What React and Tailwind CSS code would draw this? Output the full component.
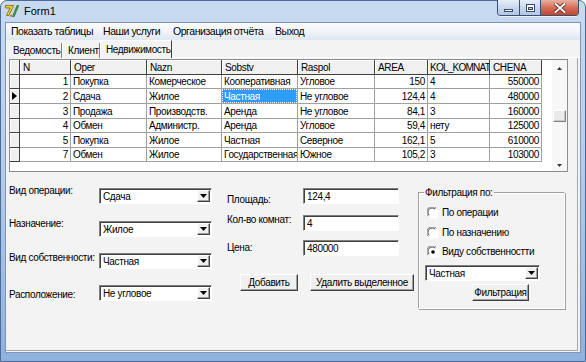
import React from "react";

const ui = "font-['Liberation_Sans',Arial,sans-serif] text-[10px] leading-[13px] tracking-[-0.35px] text-black";

const cols = [
  { t: "N", w: "w-[51px]", r: true, hc: "pl-[3px]" },
  { t: "Oper", w: "w-[76px]", hc: "pl-[3px]" },
  { t: "Nazn", w: "w-[75px]", hc: "pl-[3px]" },
  { t: "Sobstv", w: "w-[76px]", hc: "pl-[3px]" },
  { t: "Raspol", w: "w-[77px]", hc: "pl-[3px]" },
  { t: "AREA", w: "w-[53px]", r: true, hc: "pl-[3px]" },
  { t: "KOL_KOMNAT", w: "w-[62px]", hc: "pl-[2px] tracking-[-0.75px]" },
  { t: "CHENA", w: "w-[52px]", r: true, hc: "pl-[3px]" },
];

const rows = [
  { h: "h-[14px]", d: ["1", "Покупка", "Комерческое", "Кооперативная", "Угловое", "150", "4", "550000"] },
  { h: "h-[15px]", d: ["2", "Сдача", "Жилое", "Частная", "Не угловое", "124,4", "4", "480000"], cur: true },
  { h: "h-[15px]", d: ["3", "Продажа", "Производств.", "Аренда", "Не угловое", "84,1", "3", "160000"] },
  { h: "h-[14px]", d: ["4", "Обмен", "Администр.", "Аренда", "Угловое", "59,4", "нету", "125000"] },
  { h: "h-[15px]", d: ["5", "Покупка", "Жилое", "Частная", "Северное", "162,1", "5", "610000"] },
  { h: "h-[14px]", d: ["7", "Обмен", "Жилое", "Государственная", "Южное", "105,2", "3", "103000"] },
];

function Arrow() {
  return (
    <svg width="7" height="4" viewBox="0 0 7 4">
      <path d="M0 0h7L3.5 4z" fill="#000" />
    </svg>
  );
}

function Combo({ value, w = "w-[113px]" }) {
  return (
    <div className={`${w} h-[16px] flex items-stretch bg-white border border-t-[#808080] border-l-[#808080] border-r-white border-b-white shadow-[inset_1px_1px_0_#404040]`}>
      <div className="flex-1 pl-[3px] pt-px whitespace-nowrap overflow-hidden">{value}</div>
      <div className="w-[13px] my-px mr-px flex items-center justify-center bg-[#f0f0f0] border border-t-white border-l-white border-r-[#404040] border-b-[#404040] shadow-[inset_-1px_-1px_0_#a0a0a0]">
        <Arrow />
      </div>
    </div>
  );
}

function Edit({ value }) {
  return (
    <div className="w-[96px] h-[16px] bg-white pl-[3px] pt-px border border-t-[#808080] border-l-[#808080] border-r-white border-b-white shadow-[inset_1px_1px_0_#404040] whitespace-nowrap">
      {value}
    </div>
  );
}

function Button({ children, w }) {
  return (
    <div className={`${w} h-[17px] flex items-center justify-center bg-[#f0f0f0] border border-t-white border-l-white border-r-[#404040] border-b-[#404040] shadow-[inset_-1px_-1px_0_#a0a0a0] whitespace-nowrap`}>
      {children}
    </div>
  );
}

function Radio({ checked, label }) {
  return (
    <div className="flex items-center h-[13px]">
      <svg width="12" height="12" viewBox="0 0 12 12" className="shrink-0">
        <circle cx="6" cy="6" r="5.5" fill="#fff" />
        <path d="M1.2 9.2A5.3 5.3 0 0 1 9.2 1.2" stroke="#808080" strokeWidth="1" fill="none" />
        <path d="M2.2 8.2A3.9 3.9 0 0 1 8.2 2.2" stroke="#404040" strokeWidth="1" fill="none" />
        <path d="M10.8 2.8A5.3 5.3 0 0 1 2.8 10.8" stroke="#ffffff" strokeWidth="1" fill="none" />
        {checked && <circle cx="6" cy="6" r="1.8" fill="#000" />}
      </svg>
      <span className="ml-[3px] whitespace-nowrap">{label}</span>
    </div>
  );
}

function Grid() {
  return (
    <div className="w-[559px] h-[113px] flex border border-[#8c8c8c] bg-white">
      <div className="w-[542px] flex flex-col">
        <div className="flex h-[15px]">
          <div className="w-[10px] shrink-0 bg-[#f0f0f0] border-r border-b border-[#404040] shadow-[inset_1px_1px_0_#fff]" />
          {cols.map((c) => (
            <div key={c.t} className={`${c.w} ${c.hc} shrink-0 bg-[#f0f0f0] border-r border-b border-[#404040] shadow-[inset_1px_1px_0_#fff] flex items-center whitespace-nowrap overflow-hidden`}>
              {c.t}
            </div>
          ))}
          <div className="flex-1" />
        </div>
        {rows.map((row, ri) => (
          <div key={ri} className={`flex ${row.h}`}>
            <div className="w-[10px] shrink-0 bg-[#f0f0f0] border-r border-b border-[#404040] shadow-[inset_1px_1px_0_#fff] flex items-center justify-start">
              {row.cur && (
                <svg width="5" height="8" viewBox="0 0 5 8" className="ml-[2px]">
                  <path d="M0 0l5 4-5 4z" fill="#000" />
                </svg>
              )}
            </div>
            {row.d.map((v, ci) => {
              const c = cols[ci];
              const sel = row.cur && ci === 3;
              return (
                <div
                  key={ci}
                  className={`${c.w} shrink-0 border-r border-b border-[#a0a0a0] flex items-center whitespace-nowrap overflow-hidden ${sel ? "" : c.r ? "justify-end pr-[2px]" : "pl-[2px]"}`}
                >
                  {sel ? (
                    <div className="w-full h-full bg-[#3399ff] text-white flex items-center pl-[2px] outline-1 outline-dotted outline-[#ffffff] -outline-offset-1">{v}</div>
                  ) : (
                    v
                  )}
                </div>
              );
            })}
            <div className="flex-1" />
          </div>
        ))}
      </div>
      <div className="w-[15px] flex flex-col bg-[#f7f7f7]">
        <div className="h-[16px] flex items-center justify-center">
          <svg width="5" height="3" viewBox="0 0 5 3"><path d="M0 3h5L2.5 0z" fill="#333" /></svg>
        </div>
        <div className="h-[34px]" />
        <div className="h-[12px] mx-px bg-[#eaeaea] border border-t-white border-l-white border-r-[#808080] border-b-[#808080] shadow-[inset_-1px_-1px_0_#c8c8c8]" />
        <div className="flex-1" />
        <div className="h-[12px] flex items-center justify-center">
          <svg width="5" height="3" viewBox="0 0 5 3"><path d="M0 0h5L2.5 3z" fill="#333" /></svg>
        </div>
      </div>
    </div>
  );
}

export default function App() {
  return (
    <div className="w-[586px] h-[362px] overflow-hidden bg-white">
      <div className="w-[586px] h-[362px] flex flex-col rounded-t-[7px] border border-[#4d6b97] bg-gradient-to-b from-[#c8daf0] via-[#b3cbea] to-[#8fb1de]">
        {/* Title bar */}
        <div className="h-[21px] flex items-start">
          <svg width="14" height="14" viewBox="0 0 14 14" className="ml-[4px] mt-[3px]">
            <path d="M0.5 1.5h8l-4.5 10h-2.5l3.5-7.5H0.5z" fill="#f2cf2a" stroke="#7a6410" strokeWidth="0.8" />
            <path d="M7.5 12.5L12 1.5h1.8L9.2 12.5z" fill="#3fa535" stroke="#1f5c1a" strokeWidth="0.6" />
            <path d="M5 12.5l1-2 1.5 2z" fill="#d23a2a" />
          </svg>
          <div className="ml-[5px] mt-[3px] font-['Liberation_Sans',Arial,sans-serif] text-[11px] leading-[14px] text-black">Form1</div>
          <div className="ml-auto mr-[6px] -mt-px flex h-[16px] border border-t-0 border-[#3a4f70] rounded-b-[4px] overflow-hidden shadow-[0_1px_0_rgba(255,255,255,0.6)]">
            <div className="w-[22px] flex items-center justify-center bg-gradient-to-b from-[#e6eef9] via-[#c9d8ee] to-[#b1c7e6] border-r border-[#3a4f70]">
              <div className="w-[9px] h-[3px] mt-[5px] bg-white border border-[#3a4a66]" />
            </div>
            <div className="w-[21px] flex items-center justify-center bg-gradient-to-b from-[#e6eef9] via-[#c9d8ee] to-[#b1c7e6] border-r border-[#3a4f70]">
              <div className="w-[9px] h-[8px] border border-[#3a4a66] bg-white flex items-center justify-center">
                <div className="w-[5px] h-[3px] mt-[1px] bg-[#b9cbe5] border border-[#3a4a66]" />
              </div>
            </div>
            <div className="w-[37px] flex items-center justify-center bg-gradient-to-b from-[#eab0a4] via-[#d56e5a] to-[#c4442d]">
              <svg width="12" height="10" viewBox="0 0 12 10">
                <path d="M1.5 1l9 8M10.5 1l-9 8" stroke="#4a1a12" strokeWidth="3.4" strokeLinecap="square" />
                <path d="M1.5 1l9 8M10.5 1l-9 8" stroke="#ffffff" strokeWidth="2" strokeLinecap="square" />
              </svg>
            </div>
          </div>
        </div>

        {/* Client */}
        <div className={`flex-1 mx-[4px] mb-[8px] border border-[#7f95b5] bg-[#f3f3f3] flex flex-col ${ui}`}>
          {/* Menu */}
          <div className="h-[17px] flex items-center bg-gradient-to-b from-[#fbfcfe] via-[#f1f4f9] to-[#dfe7f3] text-[10.5px] tracking-[-0.45px] whitespace-nowrap">
            <div className="w-[92px] pl-[5px]">Показать таблицы</div>
            <div className="w-[70px] pl-[5px]">Наши услуги</div>
            <div className="w-[102px] pl-[5px]">Организация отчёта</div>
            <div className="pl-[5px]">Выход</div>
          </div>
          {/* Tabs */}
          <div className="h-[18px] flex items-end pl-[3px]">
            <div className="w-[53px] h-[15px] flex items-center pl-[4px] border-r border-[#808080] whitespace-nowrap">Ведомость</div>
            <div className="w-[38px] h-[15px] flex items-center pl-[5px] border-l border-white border-r border-r-[#808080] whitespace-nowrap">Клиент</div>
            <div className="w-[72px] h-[18px] flex items-center pl-[5px] bg-[#f3f3f3] border-l border-t border-white border-r border-r-[#404040] whitespace-nowrap">Недвижимость</div>
            <div className="flex-1 h-px bg-white" />
          </div>
          {/* Sheet */}
          <div className="flex-1 mr-[2px] mb-px pl-[3px] pt-px border-r border-b border-[#a8a8a8] flex flex-col">
            <Grid />
            <div className="flex items-start mt-[12px]">
              {/* Left */}
              <div className="flex flex-col">
                <div className="flex items-start">
                  <div className="w-[90px] whitespace-nowrap">Вид операции:</div>
                  <div className="mt-[4px]"><Combo value="Сдача" /></div>
                </div>
                <div className="flex items-start mt-[13px]">
                  <div className="w-[90px] whitespace-nowrap">Назначение:</div>
                  <div className="mt-[4px]"><Combo value="Жилое" /></div>
                </div>
                <div className="flex items-start mt-[14px]">
                  <div className="w-[90px] whitespace-nowrap">Вид собственности:</div>
                  <div className="mt-[2px]"><Combo value="Частная" /></div>
                </div>
                <div className="flex items-start mt-[16px]">
                  <div className="w-[90px] mt-[3px] whitespace-nowrap">Расположение:</div>
                  <Combo value="Не угловое" />
                </div>
              </div>
              {/* Middle */}
              <div className="flex flex-col ml-[15px] mt-[4px]">
                <div className="flex items-start">
                  <div className="w-[76px] mt-[5px] whitespace-nowrap">Площадь:</div>
                  <Edit value="124,4" />
                </div>
                <div className="flex items-start mt-[7px]">
                  <div className="w-[76px] whitespace-nowrap">Кол-во комнат:</div>
                  <div className="mt-[2px]"><Edit value="4" /></div>
                </div>
                <div className="flex items-start mt-[9px]">
                  <div className="w-[76px] mt-px whitespace-nowrap">Цена:</div>
                  <Edit value="480000" />
                </div>
                <div className="flex items-start mt-[18px] ml-[13px] gap-[12px]">
                  <Button w="w-[58px]">Добавить</Button>
                  <Button w="w-[104px]">Удалить выделенное</Button>
                </div>
              </div>
              {/* Group box */}
              <div className="relative ml-[4px] mt-[8px] w-[147px] h-[117px] border border-t-[#a0a0a0] border-l-[#a0a0a0] border-r-white border-b-white shadow-[inset_1px_1px_0_#fff,1px_1px_0_#a0a0a0] pl-[8px] pt-[13px] flex flex-col">
                <div className="absolute left-[5px] -top-[7px] px-px bg-[#f3f3f3] whitespace-nowrap">Фильтрация по:</div>
                <Radio label="По операции" />
                <div className="mt-[7px]"><Radio label="По назначению" /></div>
                <div className="mt-[6px]"><Radio checked label="Виду собственностти" /></div>
                <div className="mt-[7px] -ml-[2px]"><Combo value="Частная" w="w-[115px]" /></div>
                <div className="mt-[3px] ml-[45px]"><Button w="w-[57px]">Фильтрация</Button></div>
              </div>
            </div>
          </div>
        </div>
      </div>
    </div>
  );
}
